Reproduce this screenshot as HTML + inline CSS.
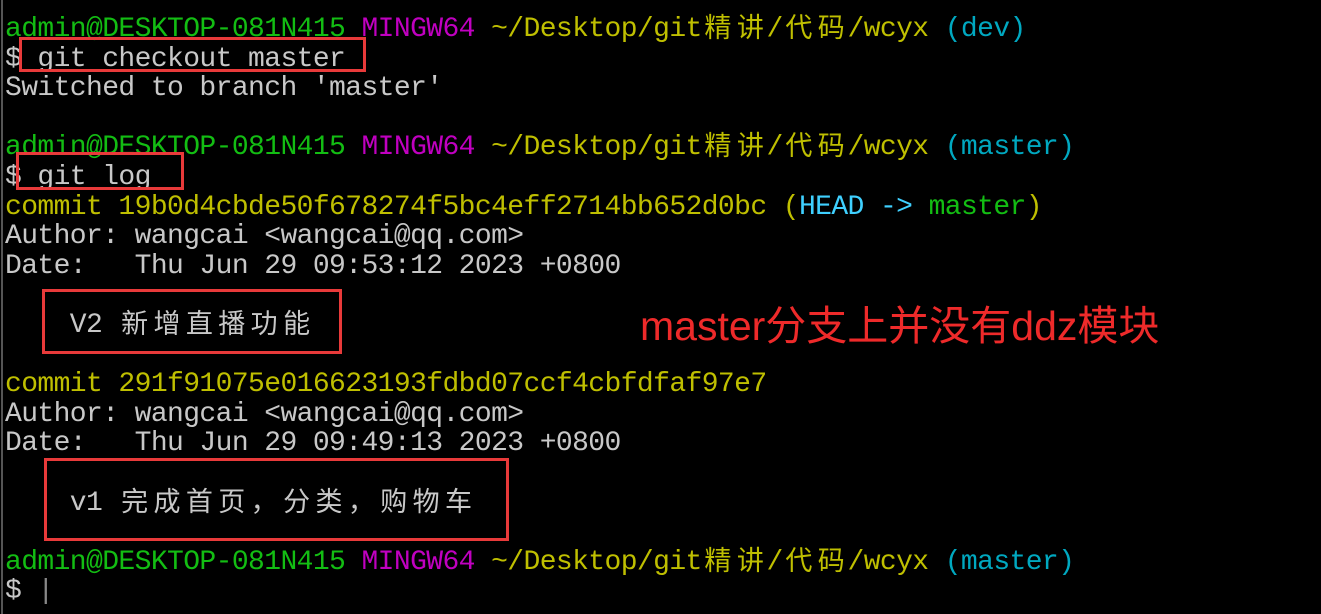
<!DOCTYPE html>
<html><head><meta charset="utf-8"><style>
html,body{margin:0;padding:0;background:#000;width:1321px;height:614px;overflow:hidden;position:relative}
#t{position:absolute;left:5px;top:3px;font-family:"Liberation Mono","Noto Sans CJK SC",monospace;font-size:28px;letter-spacing:-0.6px;color:#c8c8c8;white-space:pre}
.l{position:absolute;left:0;height:30px;line-height:30px}
.g{color:#13bd13}.m{color:#c000c0}.y{color:#bfbf00}.c{color:#00a8c0}.h{color:#3fd0ff}
.k{display:inline-block;width:32.4px;text-align:center;font-family:"Noto Sans CJK SC",sans-serif;font-size:27px;line-height:30px;vertical-align:top;letter-spacing:0;position:relative;top:-4px}
.b{position:absolute;border:3px solid #e83a3a;box-sizing:border-box}
#left{position:absolute;left:1px;top:0;width:2px;height:614px;background:#555}
#note{position:absolute;left:640px;top:301px;color:#ee2a2a;font-family:"Liberation Sans","Noto Sans CJK SC",sans-serif;font-size:41px;line-height:50px;white-space:nowrap}
</style></head><body>
<div id="left"></div>
<div id="t">
<div class="l" style="top:12px"><span class="g">admin@DESKTOP-081N415</span> <span class="m">MINGW64</span> <span class="y">~/Desktop/git<span class="k">精</span><span class="k">讲</span>/<span class="k">代</span><span class="k">码</span>/wcyx</span> <span class="c">(dev)</span></div>
<div class="l" style="top:41.6px">$ git checkout master</div>
<div class="l" style="top:71.2px">Switched to branch 'master'</div>
<div class="l" style="top:130.4px"><span class="g">admin@DESKTOP-081N415</span> <span class="m">MINGW64</span> <span class="y">~/Desktop/git<span class="k">精</span><span class="k">讲</span>/<span class="k">代</span><span class="k">码</span>/wcyx</span> <span class="c">(master)</span></div>
<div class="l" style="top:160px">$ git log</div>
<div class="l" style="top:189.6px"><span class="y">commit 19b0d4cbde50f678274f5bc4eff2714bb652d0bc (</span><span class="h">HEAD -&gt; </span><span class="g">master</span><span class="y">)</span></div>
<div class="l" style="top:219.2px">Author: wangcai &lt;wangcai@qq.com&gt;</div>
<div class="l" style="top:248.8px">Date:   Thu Jun 29 09:53:12 2023 +0800</div>
<div class="l" style="top:308px">    V2 <span class="k">新</span><span class="k">增</span><span class="k">直</span><span class="k">播</span><span class="k">功</span><span class="k">能</span></div>
<div class="l" style="top:367.2px"><span class="y">commit 291f91075e016623193fdbd07ccf4cbfdfaf97e7</span></div>
<div class="l" style="top:396.8px">Author: wangcai &lt;wangcai@qq.com&gt;</div>
<div class="l" style="top:426.4px">Date:   Thu Jun 29 09:49:13 2023 +0800</div>
<div class="l" style="top:485.6px">    v1 <span class="k">完</span><span class="k">成</span><span class="k">首</span><span class="k">页</span><span class="k">，</span><span class="k">分</span><span class="k">类</span><span class="k">，</span><span class="k">购</span><span class="k">物</span><span class="k">车</span></div>
<div class="l" style="top:544.8px"><span class="g">admin@DESKTOP-081N415</span> <span class="m">MINGW64</span> <span class="y">~/Desktop/git<span class="k">精</span><span class="k">讲</span>/<span class="k">代</span><span class="k">码</span>/wcyx</span> <span class="c">(master)</span></div>
<div class="l" style="top:574.4px">$ <span style="color:#888">|</span></div>
</div>
<div class="b" style="left:19px;top:37px;width:347px;height:35px"></div>
<div class="b" style="left:16px;top:152px;width:168px;height:38px"></div>
<div class="b" style="left:42px;top:289px;width:300px;height:65px"></div>
<div class="b" style="left:44px;top:458px;width:465px;height:83px"></div>
<div id="note">master分支上并没有ddz模块</div>
</body></html>
